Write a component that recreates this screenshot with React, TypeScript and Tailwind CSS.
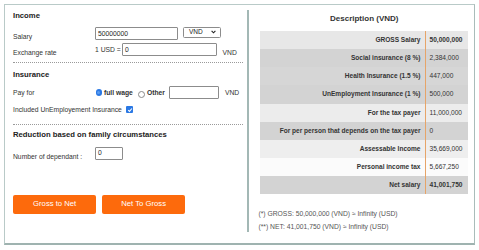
import React from "react";

const Radio = ({ checked }: { checked?: boolean }) =>
  checked ? (
    <span className="inline-flex w-[6.5px] h-[6.5px] rounded-full bg-[#2a78e4] items-center justify-center shrink-0">
      <span className="w-[3px] h-[3px] rounded-full bg-[#5b9cf0]" />
    </span>
  ) : (
    <span className="inline-block w-[6.5px] h-[6.5px] rounded-full border border-[#8a8a8a] bg-white shrink-0" />
  );

const rows: { label: string; value: string; bg: string; bold?: boolean }[] = [
  { label: "GROSS Salary", value: "50,000,000", bg: "bg-[#e7e7e7]", bold: true },
  { label: "Social insurance (8 %)", value: "2,384,000", bg: "bg-[#d3d3d3]" },
  { label: "Health Insurance (1.5 %)", value: "447,000", bg: "bg-[#d6d6d6]" },
  { label: "UnEmployment Insurance (1 %)", value: "500,000", bg: "bg-[#d3d3d3]" },
  { label: "For the tax payer", value: "11,000,000", bg: "bg-[#ececec]" },
  { label: "For per person that depends on the tax payer", value: "0", bg: "bg-[#d3d3d3]" },
  { label: "Assessable Income", value: "35,669,000", bg: "bg-[#eeeeee]" },
  { label: "Personal income tax", value: "5,667,250", bg: "bg-[#fbfbfb]" },
  { label: "Net salary", value: "41,001,750", bg: "bg-[#d3d3d3]", bold: true },
];

export default function App() {
  return (
    <div className="w-[479px] h-[250px] bg-white pt-[4px] pl-[4px] font-['Liberation_Sans',Arial,sans-serif] text-[#333]">
      <div className="w-[471px] h-[241px] border border-[#b9cac8] border-b-2 border-b-[#9fb3b0] border-r-[#a9bcba] flex">
        {/* Left column */}
        <div className="w-[242px] pl-[8px] pt-[6px] flex flex-col">
          <div className="h-[10px] leading-[10px] text-[7.7px] font-bold text-[#222]">Income</div>

          <div className="mt-[6px] flex items-start h-[13px]">
            <div className="w-[82px] pt-[6px] text-[6.75px] leading-[8px]">Salary</div>
            <div className="w-[83px] h-[13px] border border-[#8c8c8c] rounded-[1px] text-[6.75px] leading-[11px] pl-[2px] text-[#222]">50000000</div>
            <div className="ml-[5px] w-[38px] h-[10.5px] border border-[#8c8c8c] rounded-[1.5px] flex items-center justify-between pl-[5px] pr-[4px] text-[6.5px] text-[#222]">
              <span>VND</span>
              <svg width="5" height="4" viewBox="0 0 5 4"><path d="M0.6 0.8 L2.5 2.8 L4.4 0.8" fill="none" stroke="#222" strokeWidth="1.1" /></svg>
            </div>
          </div>

          <div className="mt-[3px] flex items-start h-[13px]">
            <div className="w-[82px] pt-[5.5px] text-[6.75px] leading-[8px]">Exchange rate</div>
            <div className="w-[27px] pt-[2.5px] text-[6.75px] leading-[8px]">1 USD =</div>
            <div className="w-[95px] h-[13.3px] border border-[#8c8c8c] rounded-[1px] text-[6.75px] leading-[11px] pl-[2px] text-[#222]">0</div>
            <div className="ml-[5.5px] pt-[6px] text-[6.75px] leading-[8px]">VND</div>
          </div>

          <div className="mt-[6px] mr-[4px] border-t border-dotted border-[#9a9a9a]" />

          <div className="mt-[7px] h-[10px] leading-[10px] text-[7.7px] font-bold text-[#222]">Insurance</div>

          <div className="mt-[6.4px] flex items-center h-[12.6px]">
            <div className="w-[82.5px] text-[6.75px] leading-[8px] pt-[1px]">Pay for</div>
            <Radio checked />
            <span className="ml-[2px] text-[6.75px] font-bold">full wage</span>
            <span className="ml-[5.5px]"><Radio /></span>
            <span className="ml-[2px] text-[6.75px] font-bold">Other</span>
            <div className="ml-[4.5px] w-[50px] h-[12.6px] border border-[#8c8c8c] rounded-[1px]" />
            <div className="ml-[5.5px] text-[6.75px] leading-[8px] pt-[1.5px]">VND</div>
          </div>

          <div className="mt-[6.7px] flex items-center h-[8px]">
            <span className="text-[6.75px] leading-[8px]">Included UnEmployement Insurance</span>
            <span className="ml-[4.5px] w-[6.7px] h-[6.7px] rounded-[1px] bg-[#2a78e4] flex items-center justify-center">
              <svg width="6" height="6" viewBox="0 0 6 6"><path d="M1.2 3.1 L2.5 4.4 L4.9 1.5" fill="none" stroke="white" strokeWidth="1.1" /></svg>
            </span>
          </div>

          <div className="mt-[10px] mr-[4px] border-t border-dotted border-[#9a9a9a]" />

          <div className="mt-[5.5px] h-[10px] leading-[10px] text-[7.7px] font-bold text-[#222]">Reduction based on family circumstances</div>

          <div className="mt-[6.5px] flex items-start h-[13px]">
            <div className="w-[82px] pt-[6px] text-[6.75px] leading-[8px]">Number of dependant :</div>
            <div className="w-[27.7px] h-[13px] border border-[#8c8c8c] rounded-[1px] text-[6.75px] leading-[9px] pl-[2px] text-[#222]">0</div>
          </div>

          <div className="mt-[35px] flex gap-[5.7px]">
            <div className="w-[83.3px] h-[19px] rounded-[2px] bg-[#fd6a0c] text-white text-[7.7px] flex items-center justify-center">Gross to Net</div>
            <div className="w-[83.3px] h-[19px] rounded-[2px] bg-[#fd6a0c] text-white text-[7.7px] flex items-center justify-center">Net To Gross</div>
          </div>
        </div>

        {/* Divider */}
        <div className="mt-[5px] w-[1.5px] h-[222px] bg-[#a3b8b5]" />

        {/* Right column */}
        <div className="flex-1 pt-[9px] flex flex-col">
          <div className="h-[10px] leading-[10px] text-[8px] font-bold text-[#333] text-center pl-[6px]">Description (VND)</div>
          <div className="mt-[7px] ml-[11px] w-[208px] flex flex-col">
            {rows.map((r) => (
              <div key={r.label} className={`flex h-[18.15px] ${r.bg}`}>
                <div className="w-[165px] pr-[4px] text-right text-[6.55px] font-bold leading-[18.15px] text-[#333] whitespace-nowrap">{r.label}</div>
                <div className={`flex-1 border-l border-[#e6a468] pl-[4px] text-[6.6px] leading-[18.15px] text-[#333] ${r.bold ? "font-bold" : ""}`}>{r.value}</div>
              </div>
            ))}
          </div>
          <div className="mt-[13.7px] ml-[10px] text-[6.75px] leading-[12.6px] text-[#555]">
            <div>(*) GROSS: 50,000,000 (VND) ≈ Infinity (USD)</div>
            <div>(**) NET: 41,001,750 (VND) ≈ Infinity (USD)</div>
          </div>
        </div>
      </div>
    </div>
  );
}
